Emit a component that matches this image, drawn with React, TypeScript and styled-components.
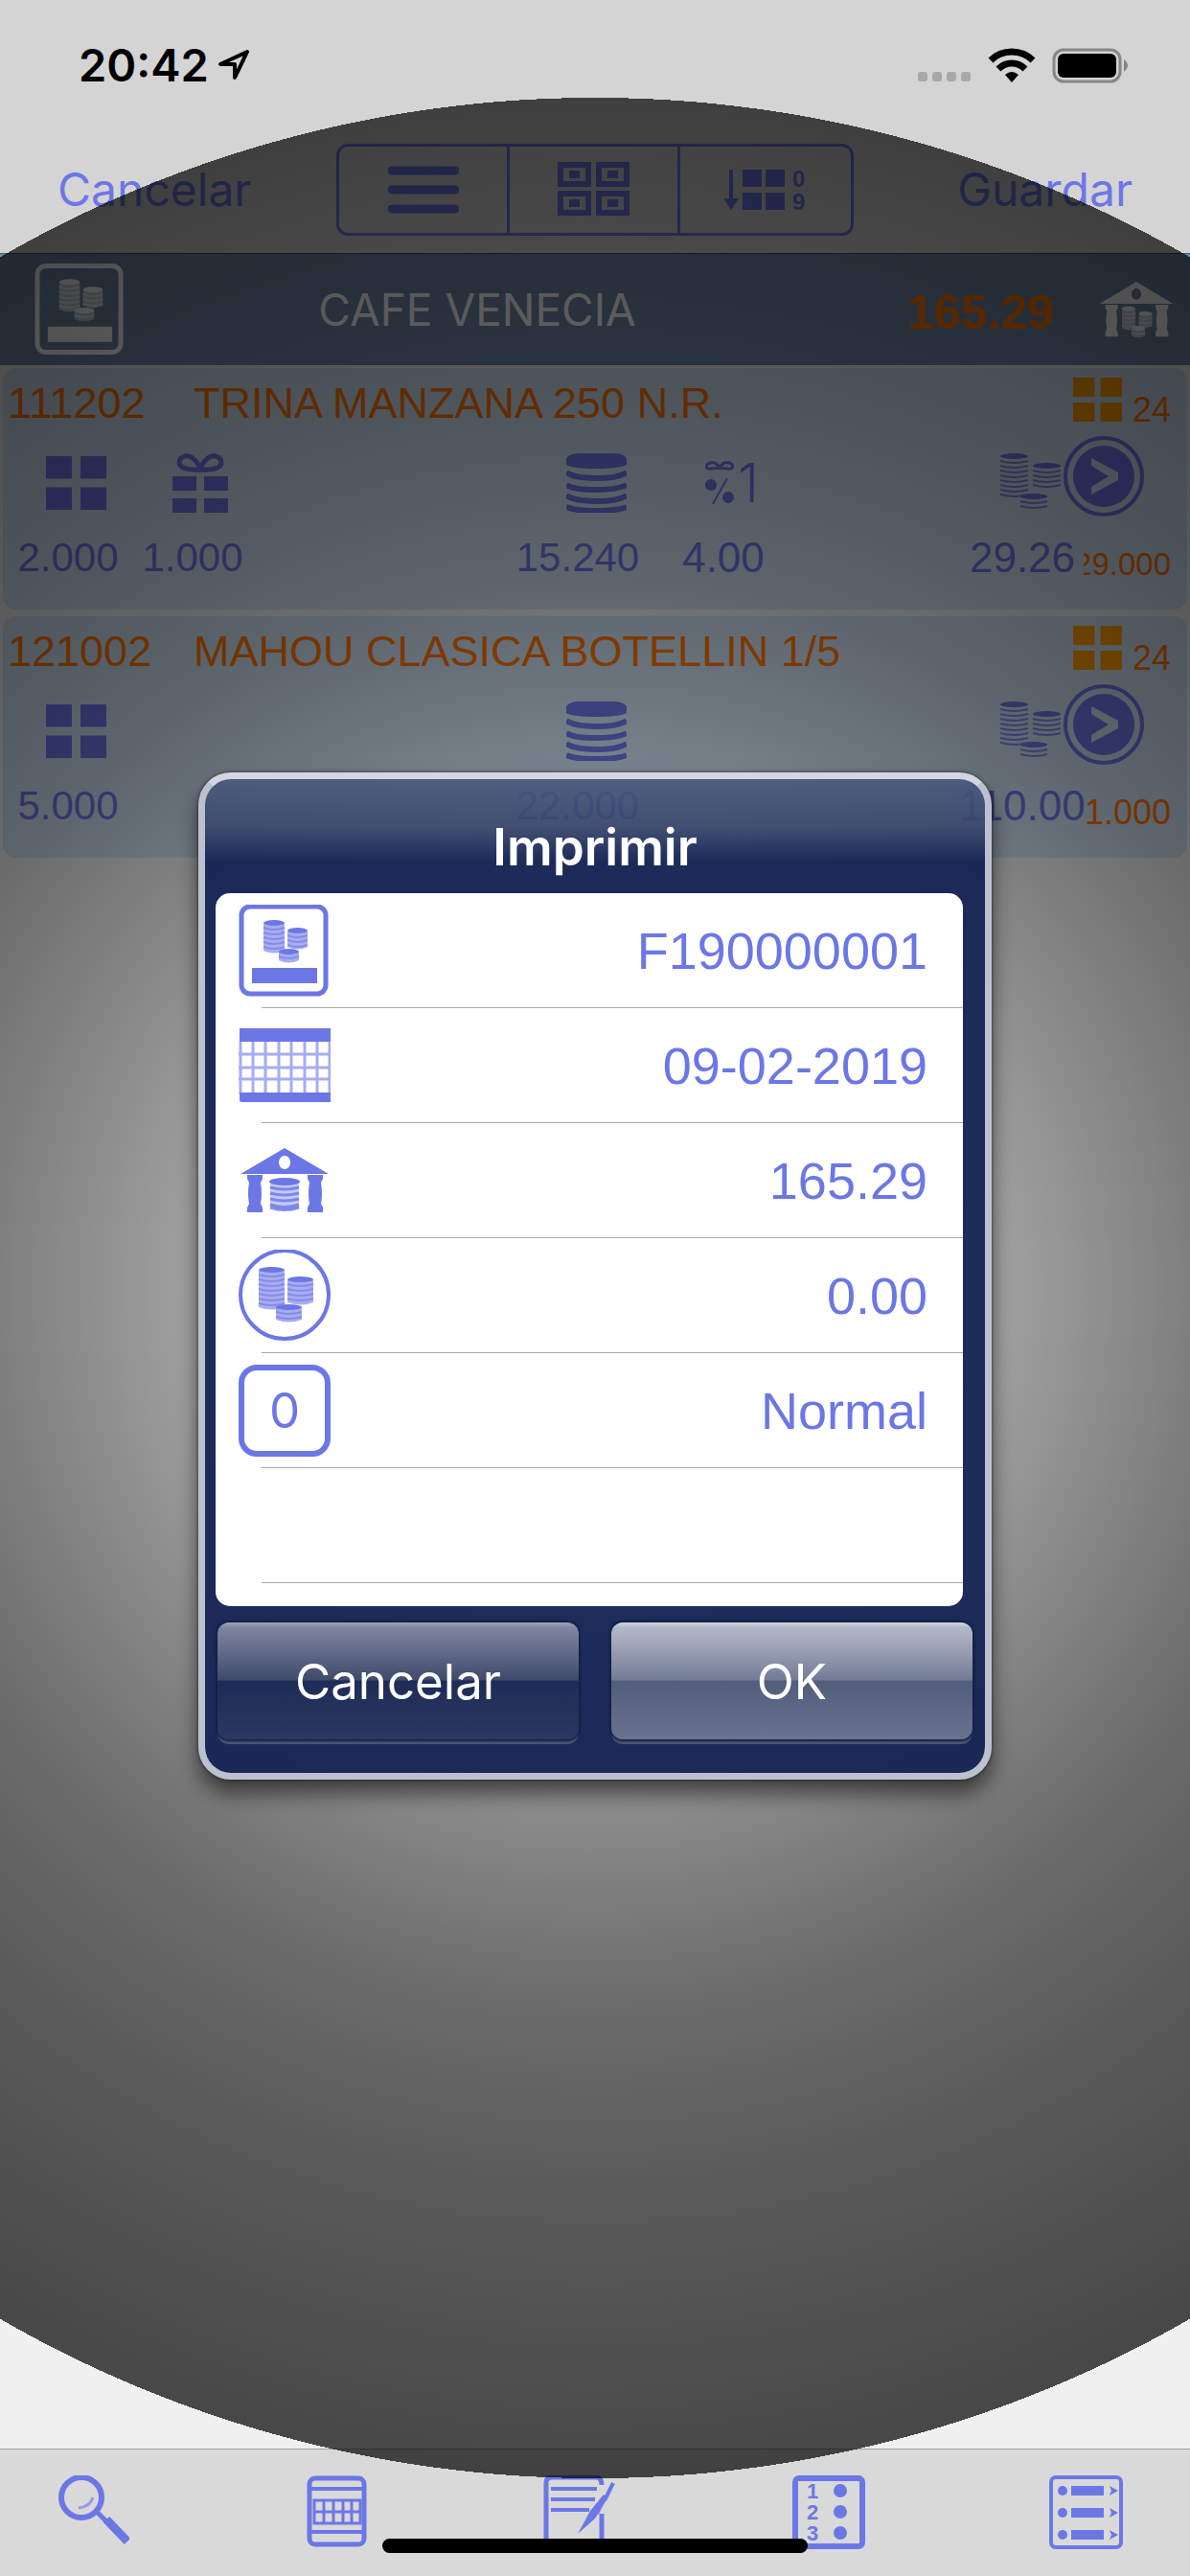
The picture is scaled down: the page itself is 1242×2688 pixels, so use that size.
import React from "react";
import styled, { createGlobalStyle } from "styled-components";

const accent = "#6c77e6";
const orange = "#ff7300";
const sans = `"Liberation Sans", Arial, sans-serif`;
const ui = `Inter, "Liberation Sans", sans-serif`;

const GlobalStyle = createGlobalStyle`
  *, *::before, *::after { box-sizing: border-box; }
  body { margin: 0; background: #f0f0f0; font-family: ${sans}; }
  button { margin: 0; padding: 0; border: 0; background: none; font: inherit; color: inherit; cursor: pointer; }
  svg { display: block; flex: none; }
  ul { margin: 0; padding: 0; list-style: none; }
`;

const Page = styled.div`
  position: relative;
  display: flex;
  flex-direction: column;
  min-height: 100vh;
  overflow: hidden;
`;

const StatusBar = styled.div`
  display: flex;
  justify-content: space-between;
  align-items: center;
  height: 132px;
  padding: 4px 64px 0 82px;
  background: #d4d4d4;
  color: #000;
`;

const StatusGroup = styled.div<{ $gap: number }>`
  display: flex;
  align-items: center;
  gap: ${(p) => p.$gap}px;
`;

const Clock = styled.span`
  font: 600 47px/56px ${ui};
`;

const NavBar = styled.nav`
  display: grid;
  grid-template-columns: 1fr 540px 1fr;
  align-items: center;
  height: 132px;
  padding: 0 60px;
  background: #d4d4d4;
  color: ${accent};
`;

const NavButton = styled.button<{ $end?: boolean }>`
  justify-self: ${(p) => (p.$end ? "end" : "start")};
  font: 400 48px/60px ${ui};
`;

const Segmented = styled.div`
  display: grid;
  grid-template-columns: repeat(3, 1fr);
  height: 96px;
  border: 3px solid ${accent};
  border-radius: 12px;
`;

const Segment = styled.button`
  display: flex;
  align-items: center;
  justify-content: center;
  &:not(:last-child) { border-right: 3px solid ${accent}; }
`;

const Customer = styled.header`
  display: flex;
  align-items: center;
  height: 117px;
  padding: 0 16px 0 36px;
  border-top: 1px solid #3f5468;
  background: #7089a8;
  color: #fff;
`;

const CustomerName = styled.h1`
  flex: 1;
  margin: 0;
  padding-right: 80px;
  text-align: center;
  font: 400 46px/54px ${ui};
`;

const CustomerTotal = styled.strong`
  padding: 6px 46px 0 0;
  color: ${orange};
  font: 700 50px/60px ${sans};
`;

const Lines = styled.ul`
  display: flex;
  flex: 1;
  flex-direction: column;
  gap: 7px;
  padding: 3px;
`;

const Card = styled.li`
  height: 252px;
  padding-top: 10px;
  border-radius: 14px;
  background: #ccdff0;
  color: ${accent};
`;

const CardTitle = styled.div`
  display: flex;
  height: 54px;
  padding: 0 17px 0 5px;
  color: ${orange};
  font: 400 45px/54px ${sans};
`;

const Code = styled.span`
  width: 194px;
`;

const Name = styled.span`
  flex: 1;
`;

const Small = styled.span<{ $size: number; $width: number }>`
  display: flex;
  justify-content: flex-end;
  width: ${(p) => p.$width}px;
  overflow: hidden;
  color: ${orange};
  font-size: ${(p) => p.$size}px;
  line-height: 68px;
`;

const IconLine = styled.div`
  display: grid;
  grid-template-columns: 153px 106px 1fr 63px 220px 233px 132px;
  align-items: center;
  height: 99px;
`;

const IconCell = styled.div<{ $align: "center" | "end" }>`
  display: flex;
  align-items: center;
  justify-content: ${(p) => p.$align};
  gap: 4px;
  padding-top: 13px;
`;

const Bonus = styled.span`
  font: 300 56px/56px ${ui};
`;

const GoButton = styled.button`
  margin-left: 3px;
`;

const ValueLine = styled.div`
  display: grid;
  grid-template-columns: 136px 124px 1fr 128px 176px 160px 128px 91px 17px;
  padding-top: 8px;
`;

const Value = styled.span<{ $large?: boolean }>`
  display: flex;
  justify-content: center;
  font: 400 ${(p) => (p.$large ? 44 : 42)}px/54px ${sans};
`;

const Toolbar = styled.footer`
  display: flex;
  justify-content: space-between;
  align-items: flex-start;
  height: 133px;
  padding: 27px 70px 0 60px;
  border-top: 1px solid #a3a3a3;
  background: #d9d9d9;
  color: ${accent};
`;

const Backdrop = styled.div`
  position: absolute;
  inset: 0;
  display: flex;
  align-items: center;
  justify-content: center;
  padding: 0 24px 25px;
  background: radial-gradient(
    circle at 50% 50%,
    rgba(0, 0, 0, 0) 0,
    rgba(0, 0, 0, 0.34) 35vw,
    rgba(0, 0, 0, 0.47) 50vw,
    rgba(0, 0, 0, 0.55) 60vw,
    rgba(0, 0, 0, 0.62) 75vw,
    rgba(0, 0, 0, 0.66) 87vw,
    rgba(0, 0, 0, 0.7) 100vw,
    transparent 100vw
  );
`;

const Dialog = styled.section`
  width: 828px;
  padding-bottom: 35px;
  border: 7px solid #bcc1d0;
  border-top-color: #d3d6df;
  border-radius: 34px;
  background:
    linear-gradient(rgba(140, 155, 178, 0.4), rgba(140, 150, 165, 0.25) 50px, rgba(140, 150, 165, 0) 86px) padding-box,
    linear-gradient(rgba(18, 34, 84, 0.8), rgba(18, 34, 84, 0.8) 50px, rgba(18, 34, 84, 0.93) 86px) padding-box;
  box-shadow: 0 0 3px 1px rgba(0, 0, 0, 0.35), 0 14px 22px rgba(0, 0, 0, 0.55);
`;

const DialogTitle = styled.h2`
  height: 119px;
  margin: 0;
  padding-top: 41px;
  color: #fff;
  text-align: center;
  font: 600 53px/60px ${ui};
`;

const Options = styled.ul`
  height: 744px;
  margin: 0 23px 17px 11px;
  border-radius: 15px;
  background: #fff;
  color: ${accent};
`;

const Option = styled.li`
  display: flex;
  align-items: center;
  justify-content: space-between;
  height: 120px;
  padding: 0 37px 0 24px;
  background: linear-gradient(#a9a9ab, #a9a9ab) 48px 100% / 100% 1px no-repeat;
  font: 400 54px/64px ${sans};
`;

const Badge = styled.span`
  display: flex;
  align-items: center;
  justify-content: center;
  width: 96px;
  height: 96px;
  border: 6px solid ${accent};
  border-radius: 19px;
  font: 400 51px/60px ${ui};
`;

const Actions = styled.div`
  display: grid;
  grid-template-columns: 1fr 1fr;
  gap: 34px;
  padding: 0 13px;
`;

const ActionButton = styled.button<{ $primary?: boolean }>`
  height: 122px;
  padding-top: 2px;
  border-radius: 12px;
  background: ${(p) =>
    p.$primary
      ? "linear-gradient(#d4d7e0 0, #b3b9c8 5px, #979eb3 30px, #727b97 60px, #525d7c 61px, #69738f)"
      : "linear-gradient(#a0a5b8 0, #7f86a0 5px, #626b87 30px, #3f4b6d 60px, #1e2c57 61px, #2a3960)"};
  box-shadow: 0 0 2px 2px #152044, 0 5px 0 0 #4a5676;
  color: #fff;
  font: 400 51px/60px ${ui};
`;

const HomeIndicator = styled.div`
  position: absolute;
  bottom: 24px;
  left: 50%;
  width: 444px;
  height: 15px;
  border-radius: 8px;
  background: #000;
  transform: translateX(-50%);
`;

type Fill = { x: number; y: number; w: number; h: number; solid?: boolean; step?: number };

/* One pile of coins: a full top coin and the curved rims below it. */
const Pile = ({ x, y, w, h, solid, step = 5 }: Fill) => {
  const rims: number[] = [];
  for (let d = 9; d <= h - 3; d += step) rims.push(y + d);
  return (
    <g>
      {solid && <path d={`M${x} ${y + 4}h${w}v${h - 6}q${-w / 2} 5 ${-w} 0z`} fill="currentColor" opacity="0.6" />}
      <ellipse cx={x + w / 2} cy={y + 3} rx={w / 2} ry="3" fill="currentColor" />
      {rims.map((r) => (
        <path
          key={r}
          d={`M${x} ${r - 1}q${w / 2} 4 ${w} 0`}
          stroke="currentColor"
          strokeWidth="2"
          fill="none"
          opacity={solid ? 0.6 : 0.85}
        />
      ))}
    </g>
  );
};

const Coins = () => (
  <svg width="63" height="62" viewBox="0 0 63 62" aria-hidden="true">
    <Pile x={0} y={0} w={29} h={47} />
    <Pile x={34} y={10} w={29} h={30} />
    <Pile x={21} y={42} w={28} h={20} />
  </svg>
);

const CoinStack = () => (
  <svg width="63" height="62" viewBox="0 0 63 62" fill="none" stroke="currentColor" strokeWidth="6" aria-hidden="true">
    <path d="M0 5Q4 0 14 0H49Q59 0 63 5V12Q55 16 31 16T0 12z" fill="currentColor" stroke="none" />
    <path d="M0 20Q8 26 31 26T63 20M0 33Q8 38 31 38T63 33M0 44Q8 50 31 50T63 44M0 56Q8 60 31 60T63 56" />
  </svg>
);

const Squares = ({ w, h, gap, color }: { w: number; h: number; gap: number; color?: string }) => {
  const a = (w - gap) / 2;
  const b = (h - gap) / 2;
  return (
    <svg width={w} height={h} viewBox={`0 0 ${w} ${h}`} fill={color || "currentColor"} aria-hidden="true">
      <path d={`M0 0h${a}v${b}h${-a}zM${a + gap} 0h${a}v${b}h${-a}zM0 ${b + gap}h${a}v${b}h${-a}zM${a + gap} ${b + gap}h${a}v${b}h${-a}z`} />
    </svg>
  );
};

const Gift = () => (
  <svg width="58" height="63" viewBox="0 0 58 63" aria-hidden="true">
    <path
      d="M29 17C26 7 19 2 13 3 6 5 5 12 11 15q7 3 18 2zM29 17C32 7 39 2 45 3c7 2 8 9 2 12q-7 3-18 2z"
      fill="none"
      stroke="currentColor"
      strokeWidth="5"
    />
    <path d="M0 24h25v15H0zM33 24h25v15H33zM0 47h25v15H0zM33 47h25v15H33z" fill="currentColor" />
  </svg>
);

const GiftPercent = () => (
  <svg width="30" height="46" viewBox="0 0 30 46" aria-hidden="true">
    <path
      d="M15 7C12 2 8 1 5 2-1 4 1 9 6 8zM15 7C18 2 22 1 25 2c6 2 4 7-1 6z"
      fill="none"
      stroke="currentColor"
      strokeWidth="3"
    />
    <circle cx="6" cy="25" r="6" fill="currentColor" />
    <circle cx="24" cy="38" r="6" fill="currentColor" />
    <path d="M23 18L8 45" stroke="currentColor" strokeWidth="2" />
  </svg>
);

const GoIcon = () => (
  <svg width="85" height="85" viewBox="0 0 85 85" aria-hidden="true">
    <circle cx="42" cy="42" r="40" fill="none" stroke="currentColor" strokeWidth="4" />
    <circle cx="42" cy="42" r="32" fill="currentColor" />
    <path d="M29 23L57 38V46L29 61V53L47 42L29 31z" fill="#ccdff0" />
  </svg>
);

const Ticket = ({ w }: { w: number }) => (
  <svg width={w} height="96" viewBox="0 0 94 96" aria-hidden="true">
    <rect x="3" y="2" width="88" height="91" rx="9" fill="none" stroke="currentColor" strokeWidth="5" />
    <Pile x={26} y={16} w={22} h={34} solid />
    <Pile x={51} y={24} w={21} h={22} solid />
    <Pile x={42} y={46} w={21} h={14} solid />
    <path d="M14 66h68v16H14z" fill="currentColor" />
  </svg>
);

const Calendar = () => (
  <svg width="96" height="80" viewBox="0 0 96 80" aria-hidden="true">
    <path d="M1 1h95v14H1zM1 68h95v10H3q-2 0-2-3z" fill="currentColor" />
    <path
      d="M2 14v56M15 14v56M28 14v56M42 14v56M55 14v56M69 14v56M82 14v56M95 14v56M0 28h96M0 42h96M0 54h96"
      stroke="currentColor"
      strokeWidth="3"
      opacity="0.6"
    />
  </svg>
);

const Bank = ({ w, h, pile }: { w: number; h: number; pile?: boolean }) => (
  <svg width={w} height={h} viewBox="0 0 96 68" preserveAspectRatio="none" aria-hidden="true">
    <path d="M48 0L94 27H2zM48 8a6 7 0 1 0 .1 0z" fill="currentColor" fillRule="evenodd" />
    <path
      d="M9 28h16v4l-2 4q2 12 0 22l2 4v5H9v-5l2-4q-2-10 0-22l-2-4zM72 28h16v4l-2 4q2 12 0 22l2 4v5H72v-5l2-4q-2-10 0-22l-2-4z"
      fill="currentColor"
    />
    {pile ? (
      <>
        <Pile x={30} y={30} w={17} h={29} solid />
        <Pile x={51} y={36} w={17} h={20} solid />
        <Pile x={42} y={54} w={17} h={14} solid />
      </>
    ) : (
      <>
        <ellipse cx="48" cy="35" rx="16" ry="4" fill="currentColor" />
        <path d="M33 36h30v26q-15 6-30 0z" fill="currentColor" opacity="0.4" />
        <path
          d="M33 41q15 4 30 0M33 47q15 4 30 0M33 53q15 4 30 0M33 59q15 5 30 0M33 62q15 5 30 0"
          stroke="currentColor"
          strokeWidth="3"
          fill="none"
          opacity="0.8"
        />
      </>
    )}
  </svg>
);

const CoinCircle = () => (
  <svg width="96" height="96" viewBox="0 0 96 96" aria-hidden="true">
    <circle cx="48" cy="47" r="46" fill="none" stroke="currentColor" strokeWidth="4" />
    <Pile x={21} y={18} w={27} h={44} solid />
    <Pile x={51} y={28} w={27} h={29} solid />
    <Pile x={39} y={57} w={27} h={18} solid />
  </svg>
);

const MenuIcon = () => (
  <svg width="74" height="50" viewBox="0 0 74 50" stroke="currentColor" strokeWidth="9" strokeLinecap="round" aria-hidden="true">
    <path d="M4 5H70M4 25H70M4 45H70" />
  </svg>
);

const TilesIcon = () => (
  <svg width="75" height="58" viewBox="0 0 75 58" aria-hidden="true">
    {[0, 40].map((x) =>
      [0, 30].map((y) => (
        <g key={`${x}-${y}`}>
          <rect x={x + 3} y={y + 3} width="29" height="20" fill="none" stroke="currentColor" strokeWidth="6" />
          <rect x={x + 12} y={y + 9} width="11" height="8" fill="currentColor" />
        </g>
      ))
    )}
  </svg>
);

const SortIcon = () => (
  <svg width="88" height="46" viewBox="0 0 88 46" aria-hidden="true">
    <path d="M6 2h4v30h6l-8 12-8-12h6zM20 2h20v18H20zM44 2h20v18H44zM20 26h20v18H20zM44 26h20v18H44z" fill="currentColor" />
    <text x="72" y="20" fontFamily="Liberation Sans" fontWeight="700" fontSize="24" fill="currentColor">0</text>
    <text x="72" y="44" fontFamily="Liberation Sans" fontWeight="700" fontSize="24" fill="currentColor">9</text>
  </svg>
);

const SearchIcon = () => (
  <svg width="75" height="75" viewBox="0 0 75 75" fill="none" stroke="currentColor" aria-hidden="true">
    <circle cx="25" cy="23" r="21" strokeWidth="6" />
    <path d="M22 34q12-1 15-11" strokeWidth="3" opacity="0.6" />
    <path d="M40 37l12 12" strokeWidth="5" />
    <path d="M51 46l22 23" strokeWidth="9" />
  </svg>
);

const PadIcon = () => (
  <svg width="63" height="75" viewBox="0 0 63 75" fill="none" stroke="currentColor" strokeWidth="5" aria-hidden="true">
    <rect x="3" y="3" width="57" height="69" rx="6" />
    <path d="M3 14h57M3 59h57" strokeWidth="4" />
    <path d="M8 26h48v24H8zM8 38h48M18 26v24M28 26v24M38 26v24M47 26v24" strokeWidth="3" />
  </svg>
);

const EditIcon = () => (
  <svg width="75" height="75" viewBox="0 0 75 75" fill="none" stroke="currentColor" strokeWidth="5" aria-hidden="true">
    <path d="M61 40V66q0 6-6 6H9q-6 0-6-6V8q0-6 6-6H55q6 0 6 8" />
    <path d="M8 14h48M8 25h46M8 36h40" strokeWidth="4" />
    <path d="M73 8L64 26M64 22L56 40" strokeWidth="4" />
    <path d="M63 20L49 37 36 61 54 45 67 24z" fill="currentColor" stroke="none" />
  </svg>
);

const NumbersIcon = () => (
  <svg width="76" height="77" viewBox="0 0 76 77" aria-hidden="true">
    <rect x="3" y="3" width="70" height="71" rx="4" fill="none" stroke="currentColor" strokeWidth="6" />
    {["1", "2", "3"].map((n, i) => (
      <g key={n} fill="currentColor">
        <text x="15" y={24 + i * 22} fontFamily="Liberation Sans" fontWeight="700" fontSize="22">{n}</text>
        <circle cx="50" cy={16 + i * 22} r="7" />
      </g>
    ))}
  </svg>
);

const ListIcon = () => (
  <svg width="85" height="77" viewBox="-8 0 85 77" aria-hidden="true">
    <rect x="2" y="2" width="73" height="73" rx="5" fill="none" stroke="currentColor" strokeWidth="4" />
    {[16, 39, 62].map((y) => (
      <g key={y} fill="currentColor">
        <circle cx="14" cy={y} r="5" />
        <rect x="23" y={y - 5} width="34" height="10" />
        <path d={`M63 ${y - 5}l9 5-9 5 2-5z`} />
      </g>
    ))}
  </svg>
);

const LocationIcon = () => (
  <svg width="34" height="34" viewBox="0 0 34 34" fill="none" stroke="#000" strokeWidth="4" strokeLinejoin="round" aria-hidden="true">
    <path d="M31 3L3 16H18V30z" />
  </svg>
);

const SignalDots = () => (
  <svg width="56" height="38" viewBox="0 0 56 38" fill="#a8a8a8" aria-hidden="true">
    {[0, 15, 30, 45].map((x) => (
      <rect key={x} x={x} y="26" width="10" height="10" rx="3" />
    ))}
  </svg>
);

const WifiIcon = () => (
  <svg width="50" height="37" viewBox="0 0 50 37" fill="none" stroke="#000" strokeWidth="7" aria-hidden="true">
    <path d="M3 13Q12 4 25 4T47 13M11 22Q17 16 25 16T39 22" />
    <path d="M25 36L18 28Q25 22 32 28z" fill="#000" stroke="none" />
  </svg>
);

const BatteryIcon = () => (
  <svg width="80" height="37" viewBox="0 0 80 37" aria-hidden="true">
    <rect x="2" y="2" width="69" height="33" rx="10" fill="none" stroke="#858585" strokeWidth="3" />
    <rect x="6" y="6" width="61" height="25" rx="6" fill="#000" />
    <path d="M75 12q8 6 0 13z" fill="#858585" />
  </svg>
);

type LineItem = {
  code: string;
  name: string;
  units: string;
  gift?: string;
  price: string;
  discount?: string;
  total: string;
  stock: string;
};

const items: LineItem[] = [
  { code: "111202", name: "TRINA MANZANA 250 N.R.", units: "2.000", gift: "1.000", price: "15.240", discount: "4.00", total: "29.26", stock: "29.000" },
  { code: "121002", name: "MAHOU CLASICA BOTELLIN 1/5", units: "5.000", price: "22.000", total: "110.00", stock: "1.000" },
];

const LineCard = ({ item }: { item: LineItem }) => (
  <Card>
    <CardTitle>
      <Code>{item.code}</Code>
      <Name>{item.name}</Name>
      <Squares w={51} h={46} gap={6} color="#ff9c00" />
      <Small $size={36} $width={51}>24</Small>
    </CardTitle>
    <IconLine>
      <IconCell $align="center"><Squares w={63} h={56} gap={9} /></IconCell>
      <IconCell $align="center">{item.gift && <Gift />}</IconCell>
      <span />
      <IconCell $align="center"><CoinStack /></IconCell>
      <IconCell $align="center">
        {item.discount && (
          <>
            <GiftPercent />
            <Bonus>1</Bonus>
          </>
        )}
      </IconCell>
      <IconCell $align="end"><Coins /></IconCell>
      <GoButton aria-label="Abrir"><GoIcon /></GoButton>
    </IconLine>
    <ValueLine>
      <Value>{item.units}</Value>
      <Value>{item.gift}</Value>
      <span />
      <Value>{item.price}</Value>
      <Value $large>{item.discount}</Value>
      <span />
      <Value $large>{item.total}</Value>
      <Small $size={item.stock.length < 6 ? 36 : 33} $width={91}>{item.stock}</Small>
    </ValueLine>
  </Card>
);

export default function App() {
  return (
    <Page>
      <GlobalStyle />
      <StatusBar>
        <StatusGroup $gap={9}>
          <Clock>20:42</Clock>
          <LocationIcon />
        </StatusGroup>
        <StatusGroup $gap={17}>
          <SignalDots />
          <WifiIcon />
          <BatteryIcon />
        </StatusGroup>
      </StatusBar>
      <NavBar>
        <NavButton>Cancelar</NavButton>
        <Segmented>
          <Segment aria-label="Lista"><MenuIcon /></Segment>
          <Segment aria-label="Mosaico"><TilesIcon /></Segment>
          <Segment aria-label="Ordenar"><SortIcon /></Segment>
        </Segmented>
        <NavButton $end>Guardar</NavButton>
      </NavBar>
      <Customer>
        <Ticket w={93} />
        <CustomerName>CAFE VENECIA</CustomerName>
        <CustomerTotal>165.29</CustomerTotal>
        <Bank w={80} h={58} pile />
      </Customer>
      <Lines>
        {items.map((item) => (
          <LineCard key={item.code} item={item} />
        ))}
      </Lines>
      <Toolbar>
        <button aria-label="Buscar"><SearchIcon /></button>
        <button aria-label="Teclado"><PadIcon /></button>
        <button aria-label="Editar"><EditIcon /></button>
        <button aria-label="Numerar"><NumbersIcon /></button>
        <button aria-label="Opciones"><ListIcon /></button>
      </Toolbar>
      <Backdrop>
        <Dialog role="dialog" aria-modal="true" aria-labelledby="print-title">
          <DialogTitle id="print-title">Imprimir</DialogTitle>
          <Options>
            <Option><Ticket w={94} />F190000001</Option>
            <Option><Calendar />09-02-2019</Option>
            <Option><Bank w={96} h={68} />165.29</Option>
            <Option><CoinCircle />0.00</Option>
            <Option><Badge>0</Badge>Normal</Option>
            <Option />
          </Options>
          <Actions>
            <ActionButton>Cancelar</ActionButton>
            <ActionButton $primary>OK</ActionButton>
          </Actions>
        </Dialog>
      </Backdrop>
      <HomeIndicator />
    </Page>
  );
}
